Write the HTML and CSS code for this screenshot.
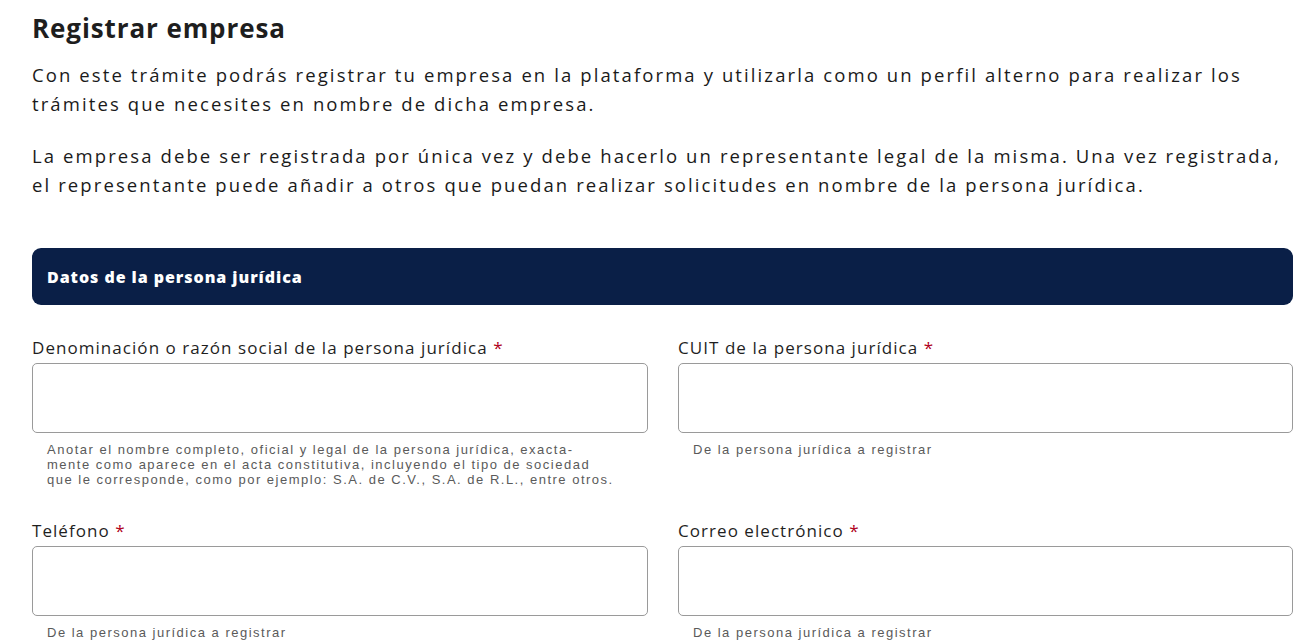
FILE: index.html
```html
<!DOCTYPE html>
<html lang="es">
<head>
<meta charset="utf-8">
<title>Registrar empresa</title>
<link rel="stylesheet" href="styles.css">
</head>
<body>
<main class="page">
  <h1 class="title">Registrar empresa</h1>
  <p class="intro">Con este trámite podrás registrar tu empresa en la plataforma y utilizarla como un perfil alterno para realizar los trámites que necesites en nombre de dicha empresa.</p>
  <p class="intro">La empresa debe ser registrada por única vez y debe hacerlo un representante legal de la misma. Una vez registrada, el representante puede añadir a otros que puedan realizar solicitudes en nombre de la persona jurídica.</p>

  <section class="section">
    <div class="section-head">Datos de la persona jurídica</div>
    <div class="grid">
      <div class="field">
        <label class="label">Denominación o razón social de la persona jurídica <span class="req">*</span></label>
        <div class="input"></div>
        <p class="help">Anotar el nombre completo, oficial y legal de la persona jurídica, exacta-<br>mente como aparece en el acta constitutiva, incluyendo el tipo de sociedad<br>que le corresponde, como por ejemplo: S.A. de C.V., S.A. de R.L., entre otros.</p>
      </div>
      <div class="field">
        <label class="label">CUIT de la persona jurídica <span class="req">*</span></label>
        <div class="input"></div>
        <p class="help">De la persona jurídica a registrar</p>
      </div>
      <div class="field">
        <label class="label">Teléfono <span class="req">*</span></label>
        <div class="input"></div>
        <p class="help">De la persona jurídica a registrar</p>
      </div>
      <div class="field">
        <label class="label">Correo electrónico <span class="req">*</span></label>
        <div class="input"></div>
        <p class="help">De la persona jurídica a registrar</p>
      </div>
    </div>
  </section>
</main>
</body>
</html>
```

FILE: styles.css
```css
* { box-sizing: border-box; }
html, body { margin: 0; padding: 0; background: #fff; }
body {
  font-family: "Open Sans", "Noto Sans", sans-serif;
  color: #1f1f1f;
}
.page {
  padding: 12px 17px 0 32px;
}
.title {
  margin: 0 0 16px;
  font-size: 26px;
  font-weight: 700;
  line-height: 32px;
  letter-spacing: 0.9px;
  color: #1e1e1e;
}
.intro {
  margin: 0 0 23px;
  font-size: 18.5px;
  line-height: 29px;
  letter-spacing: 2.1px;
  color: #1a1a1a;
}
.section { margin-top: 49px; }
.section-head {
  background: #0a1f47;
  color: #fff;
  border-radius: 9px;
  height: 57px;
  display: flex;
  align-items: center;
  padding-left: 15px;
  font-size: 16px;
  font-weight: 800;
  letter-spacing: 0.95px;
}
.grid {
  display: grid;
  grid-template-columns: 616px 615px;
  column-gap: 30px;
  row-gap: 33px;
  margin-top: 32px;
}
.field { display: flex; flex-direction: column; }
.label {
  font-size: 17px;
  line-height: 22px;
  letter-spacing: 1.05px;
  color: #1f1f1f;
  margin-bottom: 4px;
}
.req { color: #b00020; }
.input {
  height: 70px;
  border: 1px solid #9a9a9a;
  border-radius: 5px;
}
.help {
  margin: 9px 0 0 15px;
  font-family: "Liberation Sans", Arial, sans-serif;
  font-size: 13px;
  line-height: 15px;
  letter-spacing: 1.5px;
  color: #5a5a5a;
  white-space: nowrap;
}
```
